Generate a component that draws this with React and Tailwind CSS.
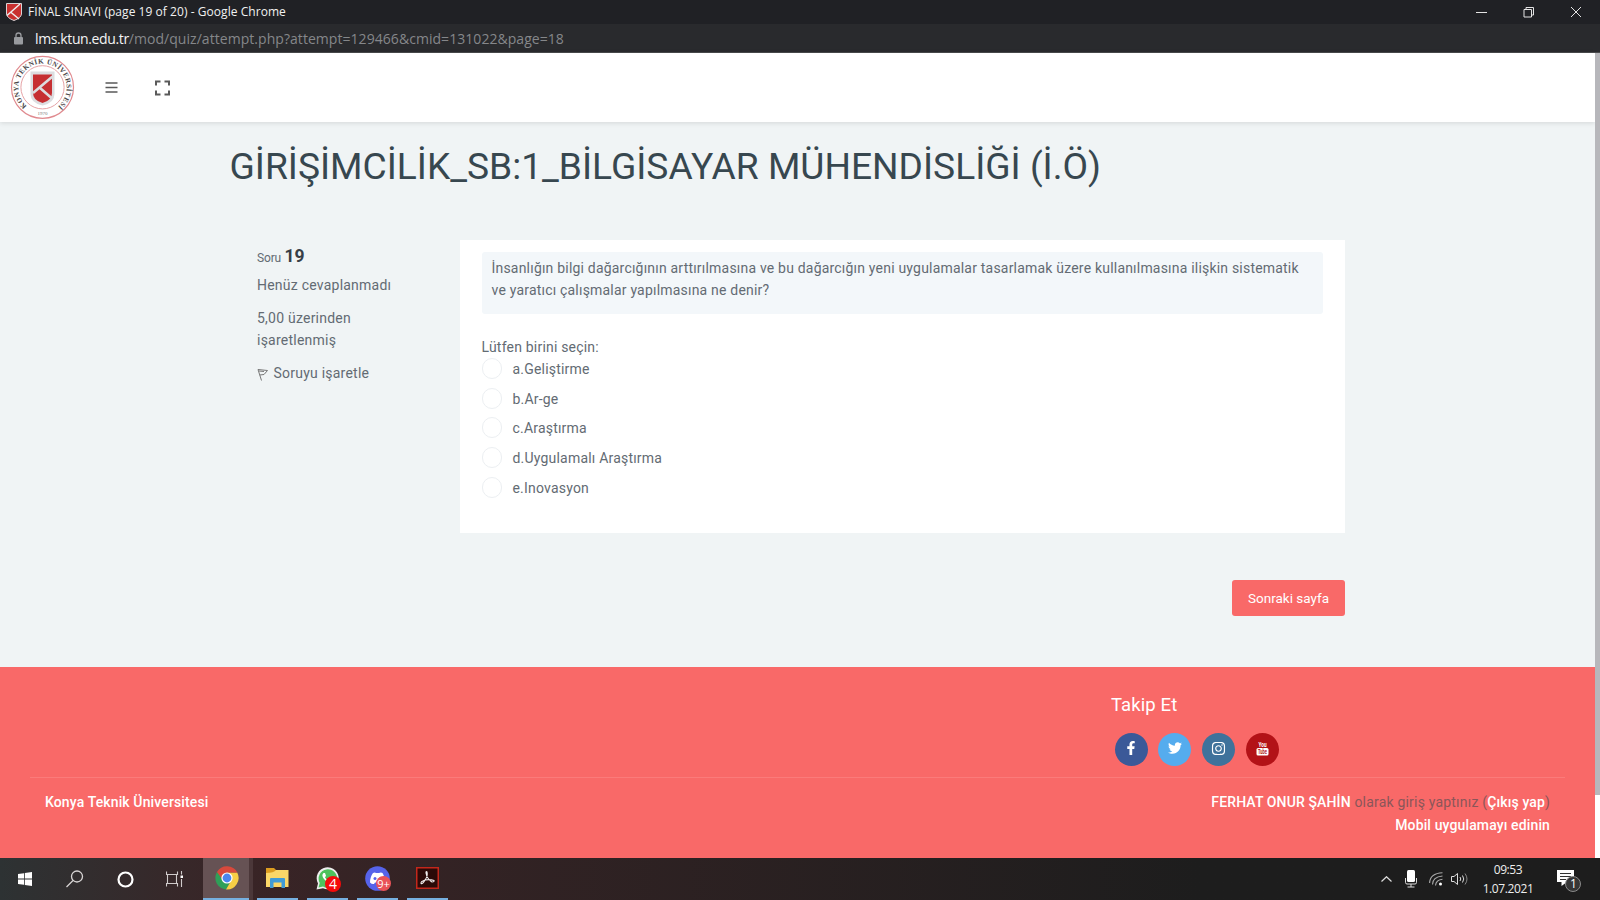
import React from "react";
import { FaFacebookF, FaTwitter, FaInstagram } from "react-icons/fa";

const options = ["a.Geliştirme", "b.Ar-ge", "c.Araştırma", "d.Uygulamalı Araştırma", "e.Inovasyon"];

function Shield({ className }) {
  return (
    <svg className={className} viewBox="0 0 16 18">
      <path d="M0.5 0.5H15.5V11Q15 15 8 17.5Q1 15 0.5 11Z" fill="#c9302f" stroke="#d8d4d6" />
      <path d="M1 12.5L14 1M4.5 9L13 16" stroke="#eee" strokeWidth="1.5" fill="none" />
    </svg>
  );
}

function Seal() {
  return (
    <svg className="mb-[2px] ml-[10px] h-[66px] w-[66px] shrink-0" viewBox="0 0 66 66">
      <defs>
        <path id="ring" d="M16.800 52.100A24.200 24.200 0 1 1 48.200 52.100" />
      </defs>
      <circle cx="32.5" cy="33.3" r="31" fill="#fff" stroke="#e08a8f" strokeWidth="1.200" />
      <circle cx="32.5" cy="33.3" r="21.600" fill="#fff" stroke="#e6a3a6" strokeWidth="1" />
      <text fontFamily="Liberation Serif, serif" fontWeight="700" fontSize="7" fill="#4a4648">
        <textPath href="#ring" textLength="118" lengthAdjust="spacing">KONYA TEKNİK ÜNİVERSİTESİ</textPath>
      </text>
      <text x="32.5" y="61" textAnchor="middle" fontFamily="Liberation Serif, serif" fontSize="5" fill="#777">1970</text>
      <path d="M20.500 17.500H44.500V40Q44.500 49 32.5 51.500Q20.500 49 20.500 40Z" fill="#dcdde0" />
      <path d="M23 20.500H42V39Q42 46.500 32.5 49Q23 46.500 23 39Z" fill="#c62f32" />
      <path d="M23 39L42.500 22.500M29.500 33.500L41.500 44" stroke="#dcdcdf" strokeWidth="2.600" fill="none" />
    </svg>
  );
}

function TitleBar() {
  return (
    <div className="flex h-[24px] items-center bg-[#202125] text-[#f1f1f1]">
      <Shield className="ml-[6px] h-[18px] w-[16px]" />
      <span className="ml-[6px] whitespace-nowrap font-['Open_Sans'] text-[12px] tracking-[0.05px]">FİNAL SINAVI (page 19 of 20) - Google Chrome</span>
      <div className="ml-auto flex items-center pr-[18px]">
        <svg className="mb-[1px] h-[12px] w-[106px]" viewBox="0 0 106 12" fill="none" stroke="#e4e4e4">
          <path d="M0 6.5H11" />
          <path d="M48 3.5h7.5v7.5h-7.5zM50 3.5v-2h7.500v7.500h-2" />
          <path d="M95 1L105 11M105 1L95 11" />
        </svg>
      </div>
    </div>
  );
}

function AddressBar() {
  return (
    <div className="flex h-[29px] items-center border-b border-[#4a4b4d] bg-[#292a2d]">
      <svg className="ml-[14px] h-[13px] w-[9px]" viewBox="0 0 9 13">
        <path d="M2 6V3.500a2.500 2.500 0 0 1 5 0V6" stroke="#999b9f" strokeWidth="1.3" fill="none" />
        <rect y="5" width="9" height="7.500" rx="1" fill="#999b9f" />
      </svg>
      <span className="ml-[12px] mt-[1px] whitespace-nowrap font-['Open_Sans'] text-[14px] text-[#85878a]">
        <span className="text-[#f4f4f4] tracking-[-0.38px]">lms.ktun.edu.tr</span>
        <span className="tracking-[0.05px]">/mod/quiz/attempt.php?attempt=129466&amp;cmid=131022&amp;page=18</span>
      </span>
    </div>
  );
}

function Header() {
  return (
    <header className="flex h-[69px] items-center bg-white shadow-[0_1px_5px_rgba(0,0,0,0.12)]">
      <Seal />
      <svg className="ml-[29px] h-[14px] w-[13px]" viewBox="0 0 13 14" stroke="#5a5a5a" strokeWidth="1.500">
        <path d="M0.500 2.100H12.500M0.500 6.500H12.500M0.500 10.900H12.500" />
      </svg>
      <svg className="ml-[36.500px] h-[16px] w-[15px]" viewBox="0 0 15 16" fill="none" stroke="#5a5a5a" strokeWidth="2">
        <path d="M1 5.500V1.500H5.500M9.500 1.500H14V5.500M14 10.500V14.500H9.500M5.500 14.500H1V10.500" />
      </svg>
    </header>
  );
}

function QuestionInfo() {
  return (
    <div className="w-[203px] shrink-0 pt-[4px] leading-[22.5px] tracking-[0.23px]">
      <div className="flex h-[24px] items-baseline pt-[0.500px]">
        <span className="text-[12px] tracking-[-0.150px]">Soru</span>
        <span className="ml-[3.500px] text-[17.500px] font-bold tracking-[-0.2px] text-[#373f47]">19</span>
      </div>
      <div className="mt-[6px]">Henüz cevaplanmadı</div>
      <div className="mt-[10px]">5,00 üzerinden<br />işaretlenmiş</div>
      <div className="mt-[10px] flex items-center">
        <svg className="mt-[4px] h-[13px] w-[12px]" viewBox="0 0 12 13" fill="none" stroke="#777" strokeWidth="1">
          <path d="M1 1.500L4.500 12.500M1 1.500L10.500 2.500L7 6.500L2.800 7M2 3L7 3.500" />
        </svg>
        <span className="ml-[4.500px]">Soruyu işaretle</span>
      </div>
    </div>
  );
}

function QuestionCard() {
  return (
    <div className="h-[293px] w-[885px] bg-white pl-[21.500px] pr-[22px] pt-[12px] tracking-[0.2px]">
      <div className="h-[62px] rounded-[3px] bg-[#f3f7fa] px-[10px] pt-[4.500px] leading-[22.500px] whitespace-nowrap">
        İnsanlığın bilgi dağarcığının arttırılmasına ve bu dağarcığın yeni uygulamalar tasarlamak üzere kullanılmasına ilişkin sistematik<br />
        ve yaratıcı çalışmalar yapılmasına ne denir?
      </div>
      <div className="mt-[22px] leading-[22px]">Lütfen birini seçin:</div>
      <div className="flex flex-col">
        {options.map((o) => (
          <label key={o} className="flex h-[29.700px] items-start">
            <span className="h-[21px] w-[20.500px] rounded-full border border-[#eceff2] bg-white" />
            <span className="ml-[10.500px] leading-[22.500px]">{o}</span>
          </label>
        ))}
      </div>
    </div>
  );
}

function YoutubeBadge() {
  return (
    <svg className="h-[23px] w-[21px] overflow-visible" viewBox="0 0 21 23">
      <text x="10.500" y="10" textAnchor="middle" textLength="8" lengthAdjust="spacingAndGlyphs" fontFamily="Roboto, sans-serif" fontWeight="700" fontSize="7.500" fill="#fff">You</text>
      <rect x="4.500" y="11" width="12" height="7.500" rx="1.500" fill="#fff" />
      <text x="10.500" y="17" textAnchor="middle" textLength="9" lengthAdjust="spacingAndGlyphs" fontFamily="Roboto, sans-serif" fontWeight="700" fontSize="6.500" fill="#b31217">Tube</text>
    </svg>
  );
}

function Footer() {
  const dot = "flex h-[33px] w-[33px] items-center justify-center rounded-full pb-[2px] text-white";
  return (
    <footer className="h-[191px] bg-[#f96968] pt-[25px] text-[14px] font-medium text-white">
      <div className="pl-[1111px]">
        <div className="h-[26px] text-[18.500px] font-normal leading-[26px] tracking-[0.1px]">Takip Et</div>
        <div className="mt-[14.500px] flex gap-[10.800px] pl-[3.500px]">
          <span className={dot + " bg-[#3b5998]"}><FaFacebookF size={14} /></span>
          <span className={dot + " bg-[#55acee]"}><FaTwitter size={14} /></span>
          <span className={dot + " bg-[#3f729b]"}><FaInstagram size={15} /></span>
          <span className={dot + " bg-[#b31217]"}><YoutubeBadge /></span>
        </div>
      </div>
      <div className="mx-[30px] mt-[11px] flex justify-between border-t border-[#fb7b7a] px-[15px] pt-[13.500px] leading-[22.500px] tracking-[0.13px]">
        <div>Konya Teknik Üniversitesi</div>
        <div className="text-right">
          FERHAT ONUR ŞAHİN <span className="font-normal tracking-[0.2px] text-[#8a5659]">olarak giriş yaptınız (</span>Çıkış yap<span className="font-normal text-[#8a5659]">)</span>
          <br />Mobil uygulamayı edinin
        </div>
      </div>
    </footer>
  );
}

function AppSlot({ children, active }) {
  return (
    <div className={active ? "flex h-full w-[46px] flex-col items-center bg-[#665254]" : "flex h-full w-[41px] flex-col items-center"}>
      <div className="flex h-[40px] items-center">{children}</div>
      <div className="h-[2px] w-full bg-[#76b0e0]" />
    </div>
  );
}

function Taskbar() {
  return (
    <div className="flex h-[42px] bg-linear-to-r from-[#2d3233] via-[#392426] via-15% to-[#1d1d1d] to-75%">
      <div className="flex w-[203px] items-center">
        <svg className="ml-[18px] h-[14px] w-[14px]" viewBox="0 0 14 14" fill="#fff">
          <path d="M0 2L6 1.200V6.600H0ZM6.800 1.100L14 0V6.600H6.800ZM0 7.400H6V12.800L0 12ZM6.800 7.400H14V14L6.800 12.900Z" />
        </svg>
        <svg className="ml-[34px] h-[18px] w-[18px]" viewBox="0 0 18 18" fill="none" stroke="#d8d5d5" strokeWidth="1.300">
          <circle cx="11" cy="6.500" r="5.500" /><path d="M7 10.500L0.500 17" />
        </svg>
        <svg className="ml-[32.500px] h-[17px] w-[17px]" viewBox="0 0 17 17"><circle cx="8.500" cy="8.500" r="7" fill="none" stroke="#fff" strokeWidth="2.200" /></svg>
        <svg className="ml-[32.500px] h-[16px] w-[17px]" viewBox="0 0 17 16" fill="none" stroke="#d0cbcb" strokeWidth="1.100">
          <path d="M0.500 0.500V3.500H11.500V0.500M0.500 15.500V12.500H11.500V15.500M1.500 3.500V12.500M10.500 3.500V12.500M15.500 0V3.500M15.500 8V16" />
          <path d="M14.500 4.500h2.500v2.500h-2.500z" fill="#fff" stroke="none" />
        </svg>
      </div>
      <AppSlot active>
        <svg className="ml-[2px] h-[24px] w-[24px]" viewBox="0 0 24 24">
          <path d="M12 12L2 6A11.600 11.600 0 0 0 11 23.500L16 15Z" fill="#2f9f58" />
          <path d="M12 6.500H22.200A11.600 11.600 0 0 1 11 23.500L16.500 14Z" fill="#f7ce45" />
          <path d="M2 6A11.600 11.600 0 0 1 22.300 6.500H12L7 13Z" fill="#d8493c" />
          <circle cx="12" cy="12" r="5.600" fill="#fff" /><circle cx="12" cy="12" r="4.400" fill="#4a86ee" />
        </svg>
      </AppSlot>
      <div className="h-full w-[4px] bg-[#4b3739]" />
      <div className="ml-[4px] flex gap-[9px]">
        <AppSlot>
          <svg className="mr-[1px] h-[20px] w-[24px]" viewBox="0 0 24 20">
            <path d="M1 0H9L11 2V6H1Z" fill="#dc9c20" /><path d="M1 5Q9 5 11 2H23.500V19H1Z" fill="#fbd768" />
            <path d="M5 20V11Q5 10 6 10H19Q20 10 20 11V20H16.500V14.500H8.500V20Z" fill="#419bd6" />
          </svg>
        </AppSlot>
        <AppSlot>
          <div className="relative">
            <svg className="h-[23px] w-[23px]" viewBox="0 0 23 23">
              <path d="M0.500 22.500L2 16.500A11 11 0 1 1 7 21.200Z" fill="#eee" />
              <path d="M2.500 20.500L3.700 16A9.300 9.300 0 1 1 7 19.500Z" fill="#4dc25c" />
              <path d="M7.500 6Q5 8 8 12Q12 17 16 16Q17.500 14.500 16.500 13.500L14.500 12.500L13 14Q10.500 13 9 10.500L10 8.800L9 6Z" fill="#fff" />
            </svg>
            <span className="absolute left-[9px] top-[9px] flex h-[16px] w-[16px] items-center justify-center rounded-full bg-[#f50a0a] font-['Open_Sans'] text-[14px] leading-none text-white">4</span>
          </div>
        </AppSlot>
        <AppSlot>
          <div className="relative">
            <svg className="h-[25px] w-[25px]" viewBox="0 0 25 25">
              <circle cx="12.500" cy="12.500" r="12.300" fill="#5663ea" />
              <path d="M8 7Q10 6 11 7H14Q16 6 17.500 7Q20.500 12 20 16.500Q18 18.500 16 18L15 16.500H10L9 18Q7 18.500 5 16.500Q5 11 8 7Z" fill="#fff" />
              <circle cx="10" cy="12.500" r="1.500" fill="#5663ea" /><circle cx="15.500" cy="12.500" r="1.500" fill="#5663ea" />
            </svg>
            <span className="absolute left-[11px] top-[10px] flex h-[15px] w-[15px] items-center justify-center rounded-full bg-[#e95358] font-['Open_Sans'] text-[11px] leading-none text-white">9+</span>
          </div>
        </AppSlot>
        <AppSlot>
          <svg className="h-[22px] w-[23px]" viewBox="0 0 23 22">
            <rect x="0.750" y="0.750" width="21.500" height="20.500" fill="#2b0a08" stroke="#c3271b" strokeWidth="1.500" />
            <path d="M5 16.500Q4.500 14.500 9 13Q12 9 11 5Q10 4 10 6Q11 12 16 15Q18.500 15 18 13.500Q14 12 9 13Q6.500 17.500 5 16.500" fill="none" stroke="#f1eded" strokeWidth="1.100" />
          </svg>
        </AppSlot>
      </div>
      <div className="ml-auto flex items-center text-[#eee]">
        <svg className="h-[6px] w-[11px]" viewBox="0 0 11 6" fill="none" stroke="#ddd" strokeWidth="1.200"><path d="M0.500 5.500L5.500 0.700L10.500 5.500" /></svg>
        <svg className="ml-[13px] h-[18px] w-[12px]" viewBox="0 0 12 18"><rect x="2" width="8" height="12" rx="1.500" fill="#fff" /><path d="M0.500 8V12.500Q0.500 14 2 14H10Q11.500 14 11.500 12.500V8M6 14V17M2.500 17H9.500" fill="none" stroke="#ddd" /></svg>
        <svg className="ml-[12px] h-[14px] w-[14px]" viewBox="0 0 14 14" fill="none" stroke="#aaa" strokeWidth="1.100">
          <path d="M0.600 11Q1 1.500 13.500 0.800M3.500 12.500Q3.500 5 13.500 4M6.500 13.500Q7 8 13.500 7.300" /><circle cx="11.500" cy="12" r="1.500" fill="#fff" stroke="none" />
        </svg>
        <svg className="ml-[8px] h-[14px] w-[17px]" viewBox="0 0 17 14" fill="none" stroke="#ddd">
          <path d="M0.500 4.500H3L6.500 1.500V12.500L3 9.500H0.500ZM9 5Q10.500 7 9 9M11.500 3.500Q14 7 11.500 10.500" /><path d="M14 1.500Q18 7 14 12.500" stroke="#888" />
        </svg>
        <div className="ml-[14px] w-[52px] whitespace-nowrap text-center font-['Open_Sans'] text-[12px] leading-[19px] tracking-[-0.400px]">09:53<br />1.07.2021</div>
        <div className="relative ml-[22px] mr-[18px] h-[26px] w-[26px]">
          <svg className="h-[26px] w-[26px]" viewBox="0 0 26 26">
            <path d="M1 4H18V16H11L5.500 20V16H1Z" fill="#fff" /><path d="M4 7.500H15M4 10.500H15M4 13.500H10" stroke="#333" strokeWidth="1.100" />
            <circle cx="17" cy="18" r="7.500" fill="#363636" stroke="#8a8a8a" />
          </svg>
          <span className="absolute left-[14px] top-[11px] font-['Open_Sans'] text-[12px] leading-[14px] text-white">1</span>
        </div>
      </div>
    </div>
  );
}

export default function App() {
  return (
    <div className="flex h-[900px] w-[1600px] flex-col overflow-hidden bg-[#f0f4f5] font-['Roboto'] text-[14px] text-[#636b73]">
      <TitleBar />
      <AddressBar />
      <div className="flex h-[805px]">
        <div className="flex w-[1595px] flex-col">
          <Header />
          <main className="h-[545px] px-[230px] pt-[20px]">
            <h1 className="-ml-[0.500px] h-[50px] whitespace-nowrap text-[37.170px] font-normal leading-[49px] text-[#37474f]">GİRİŞİMCİLİK_SB:1_BİLGİSAYAR MÜHENDİSLİĞİ (İ.Ö)</h1>
            <div className="mt-[48px] flex pl-[27px]">
              <QuestionInfo />
              <QuestionCard />
            </div>
            <div className="mt-[47px] flex pl-[1002px]">
              <button className="h-[36px] w-[113px] rounded-[3px] bg-[#f96968] text-[13.500px] font-normal text-white">Sonraki sayfa</button>
            </div>
          </main>
          <Footer />
        </div>
        <div className="flex w-[5px] flex-col bg-white">
          <div className="h-[742px] bg-[#b7b7bb]" />
        </div>
      </div>
      <Taskbar />
    </div>
  );
}
